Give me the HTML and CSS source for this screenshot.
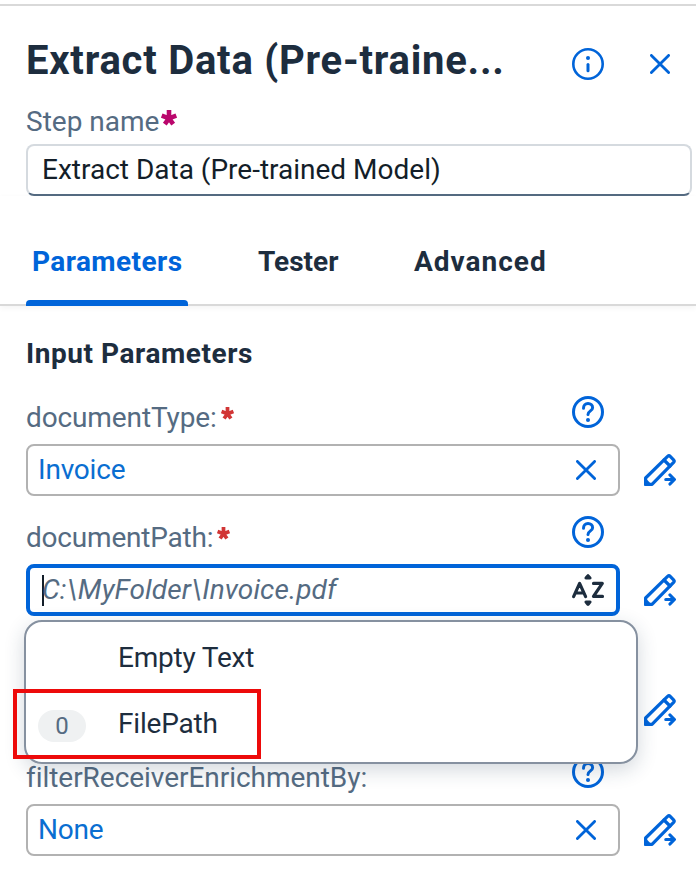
FILE: index.html
```html
<!DOCTYPE html>
<html lang="en">
<head>
<meta charset="utf-8">
<title>Extract Data</title>
<link rel="stylesheet" href="styles.css">
</head>
<body>
<svg class="defs" width="0" height="0">
  <symbol id="close" viewBox="0 0 20 20"><path d="M1.4 1.4 18.6 18.6M18.6 1.4 1.4 18.6" fill="none" stroke="currentColor" stroke-width="2.8" stroke-linecap="round"/></symbol>
  <symbol id="help" viewBox="0 0 32 32"><g fill="none" stroke="currentColor" stroke-linecap="round" stroke-linejoin="round"><circle cx="16" cy="16" r="14.5" stroke-width="3"/><path d="M11.5 12.2C11.5 9.3 13.4 7.5 16 7.5s4.6 1.8 4.6 4.2c0 3.2-4.6 3.2-4.6 6.8" stroke-width="3"/></g><circle cx="16" cy="24" r="2" fill="currentColor"/></symbol>
  <symbol id="pencil" viewBox="0 0 32 32"><g fill="none" stroke="currentColor" stroke-width="3.2" stroke-linejoin="round" stroke-linecap="round"><path d="M1.6 30.4V24L23.6 2.4Q25 1.2 26.2 2.4L29.6 5.8Q30.8 7 29.6 8.4L8 30.4Z"/><path d="M20 6l6 6" /><path d="M21.8 25.5H30M26 21 30.4 25.5 26 30"/></g><path d="M1 23.5 8.5 31.5H0V26Z" fill="currentColor"/></symbol>
  <symbol id="star" viewBox="0 0 16 16"><path d="M8 8.3V0M8 8.3.7 5.6M8 8.3l7.3-2.7M8 8.3l-4.2 5.9M8 8.3l4.2 5.9" stroke="currentColor" stroke-width="4.6"/></symbol>
</svg>
<main class="panel">
  <header class="header">
    <h1 class="title">Extract Data (Pre-traine...</h1>
    <svg class="info" viewBox="0 0 32 32"><circle cx="16" cy="16" r="14.7" fill="none" stroke="currentColor" stroke-width="2.6"/><circle cx="16" cy="10" r="2" fill="currentColor"/><path d="M16 16.5v6.2" stroke="currentColor" stroke-width="3" stroke-linecap="round"/></svg>
    <svg class="close"><use href="#close"/></svg>
  </header>
  <section class="step">
    <div class="step-label"><span>Step name</span><svg class="star magenta"><use href="#star"/></svg></div>
    <div class="step-input"><span>Extract Data (Pre-trained Model)</span></div>
  </section>
  <nav class="tabs">
    <div class="tab active"><span class="t-params">Parameters</span></div>
    <div class="tab"><span>Tester</span></div>
    <div class="tab"><span class="t-adv">Advanced</span></div>
  </nav>
  <section class="fields">
    <h2 class="subtitle">Input Parameters</h2>
    <div class="field">
      <div class="label"><span class="t-type">documentType:</span><svg class="star red"><use href="#star"/></svg><svg class="help"><use href="#help"/></svg></div>
      <div class="row"><div class="input"><span class="t-invoice">Invoice</span><svg class="close"><use href="#close"/></svg></div><svg class="pencil"><use href="#pencil"/></svg></div>
    </div>
    <div class="field">
      <div class="label"><span class="t-path">documentPath:</span><svg class="star red"><use href="#star"/></svg><svg class="help"><use href="#help"/></svg></div>
      <div class="row"><div class="input focus"><i class="caret"></i><span class="t-placeholder">C:\MyFolder\Invoice.pdf</span>
        <svg class="sort" viewBox="0 0 32 32"><g fill="none" stroke="currentColor" stroke-width="3.2" stroke-linecap="round" stroke-linejoin="round"><path d="M1.6 22.6 7.6 9.4 13.6 22.6M4.5 19h6.5M21.5 9.4h8.8L21.5 22.4h9"/></g><path d="M16 0Q17 0 19.5 3.5 20 5.5 18 5.5H14Q12 5.5 12.5 3.5 15 0 16 0ZM16 32Q17 32 19.5 28.5 20 26.5 18 26.5H14Q12 26.5 12.5 28.5 15 32 16 32Z" fill="currentColor"/></svg></div><svg class="pencil"><use href="#pencil"/></svg></div>
      <div class="menu">
        <div class="option"><span class="t-empty">Empty Text</span></div>
        <div class="option"><span class="badge">0</span><span class="t-empty">FilePath</span></div>
        <div class="highlight"></div>
      </div>
    </div>
    <div class="field">
      <div class="label"></div>
      <div class="row"><div class="input"></div><svg class="pencil"><use href="#pencil"/></svg></div>
    </div>
    <div class="field">
      <div class="label"><span class="t-filter">filterReceiverEnrichmentBy:</span><svg class="help"><use href="#help"/></svg></div>
      <div class="row"><div class="input"><span class="t-none">None</span><svg class="close"><use href="#close"/></svg></div><svg class="pencil"><use href="#pencil"/></svg></div>
    </div>
  </section>
</main>
</body>
</html>
```
FILE: styles.css
```css
* { box-sizing: border-box; }
body { margin: 0; background: #fff; color: #1d2d3e; font: 28px/36px Roboto, sans-serif; overflow: hidden; }
svg { display: block; flex: none; color: #0064d9; overflow: visible; }
.defs { position: absolute; }
span { white-space: nowrap; }
.panel { height: 896px; padding-top: 4px; overflow: hidden; }
.header { height: 100px; border-top: 2px solid #d9d9d9; display: flex; align-items: center; padding: 18px 26px 0; }
.title { margin: -6px 0 0; width: 546px; font-size: 40px; line-height: 52px; font-weight: 700; letter-spacing: .76px; white-space: nowrap; }
.info, .help { width: 32px; height: 32px; }
.header .close { margin-left: 68px; }
.header .info { margin-right: -22px; }
.close { width: 20px; height: 20px; }
.step { padding: 0 4px 0 26px; }
.step-label { height: 40px; display: flex; color: #556b82; }
.star { width: 16px; height: 16px; margin: 6px 0 0 2px; }
.magenta { color: #ba066c; }
.star.red { width: 13px; height: 13px; margin: 7px 0 0 4px; color: #d13535; }
.step-input { height: 52px; border: 2px solid #d5dadf; border-bottom-color: #556b82; border-radius: 8px; padding: 6px 14px; color: #131e29; }
.tabs { height: 110px; display: flex; border-bottom: 2px solid #d9d9d9; box-shadow: 0 2px 6px #0000000c; padding: 48px 0 0 26px; font-weight: 700; }
.tab { height: 62px; width: 162px; margin-right: 64px; padding: 0 6px; display: flex; flex-direction: column; justify-content: space-between; }
.tab + .tab { width: 92px; }
.active { color: #0064d9; }
.active::after { content: ""; height: 6px; margin: 0 -6px; background: #0064d9; border-radius: 4px 4px 0 0; }
.t-params { letter-spacing: .42px; }
.t-adv { letter-spacing: 1px; }
.fields { padding: 30px 0 0 26px; }
.subtitle { margin: 0; font-size: 28px; line-height: 36px; height: 40px; font-weight: 700; letter-spacing: .56px; }
.field { height: 120px; position: relative; }
.label { height: 68px; width: 578px; padding-top: 24px; display: flex; color: #556b82; }
.t-type { letter-spacing: -.12px; }
.t-path, .t-empty { letter-spacing: -.2px; }
.t-filter { letter-spacing: -.04px; }
.t-invoice, .t-none { letter-spacing: -.2px; }
.t-placeholder { letter-spacing: .1px; }
.help { margin: -4px 0 0 auto; }
.row { display: flex; align-items: center; gap: 24px; }
.input { width: 594px; height: 52px; border: 2px solid #b2b2b2; border-radius: 8px; padding: 0 22px 0 10px; display: flex; align-items: center; justify-content: space-between; color: #0a6ed1; }
.pencil { width: 32px; height: 32px; }
.focus { border: 4px solid #0064d9; padding: 0 12px; color: #556b82; font-style: italic; }
.focus span { flex: 1; }
.caret { width: 2px; height: 31px; background: #131e29; margin-right: -2px; }
.sort { width: 32px; height: 32px; color: #1d2d3e; }
.menu { position: absolute; z-index: 2; left: -2px; top: 124px; width: 614px; height: 144px; border: 2px solid #8691a0; border-radius: 18px; background: #fff; box-shadow: 0 6px 20px #223b5533; padding: 3px 12px; }
.option { height: 66px; padding-left: 80px; display: flex; align-items: center; position: relative; }
.badge { position: absolute; left: 0; top: 19px; width: 48px; height: 32px; border-radius: 16px; background: #eff1f2; color: #556b82; font-size: 24px; line-height: 32px; text-align: center; }
.highlight { position: absolute; left: -13px; top: 67px; width: 248px; height: 70px; border: 4px solid #ed0a0a; }
```
